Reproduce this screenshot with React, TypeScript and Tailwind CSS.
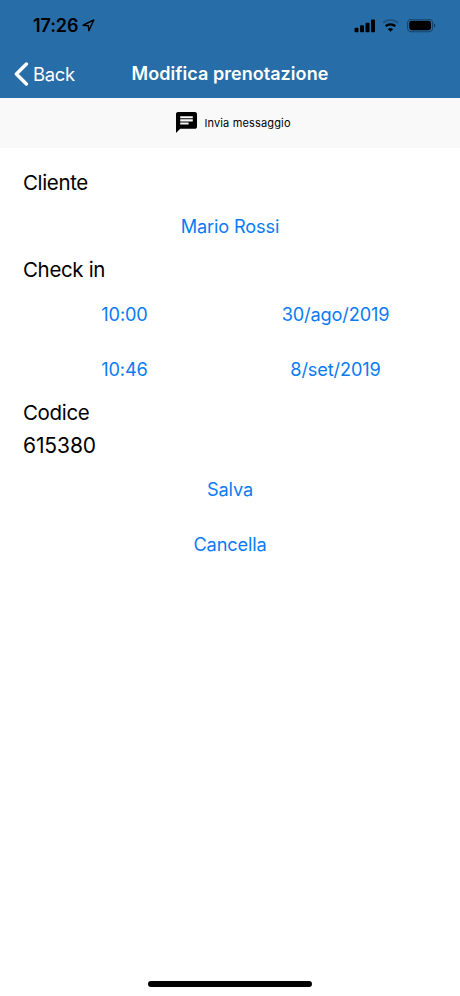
import type { ReactNode } from "react";

function StatusBar() {
  return (
    <div className="flex h-[50px] items-center justify-between pt-px pl-[33px] pr-[24px] text-black">
      <div className="flex items-center gap-[4px]">
        <span className="text-[18px] leading-6 font-semibold tracking-[-0.1px]">17:26</span>
        <svg width="14" height="14" viewBox="0 0 14 14" fill="none">
          <path d="M11.8 1 1 6.2l5.4.5.4 5z" stroke="currentColor" strokeWidth="1.4" strokeLinejoin="round" />
        </svg>
      </div>
      <div className="flex items-center">
        <svg width="22" height="14" viewBox="0 0 22 14" fill="currentColor">
          <rect x="0.5" y="8.7" width="4" height="4.5" rx="1" />
          <rect x="6" y="6.2" width="4" height="7" rx="1" />
          <rect x="11.5" y="3.7" width="4" height="9.5" rx="1" />
          <rect x="17" y="0.4" width="4" height="12.8" rx="1" />
        </svg>
        <svg className="ml-[6px]" width="17" height="14" viewBox="0 0 17 14" fill="none" stroke="currentColor">
          <path d="M1 4a11 11 0 0 1 15 0" strokeWidth="2" opacity="0.22" />
          <path d="M3.7 7.2a7 7 0 0 1 9.6 0" strokeWidth="2.3" />
          <path d="M8.5 12.8 5.9 10.3a3.8 3.8 0 0 1 5.2 0z" fill="currentColor" stroke="none" />
        </svg>
        <svg className="ml-[8px]" width="29" height="14" viewBox="0 0.4 29 14" fill="none">
          <rect x="0.6" y="0.6" width="25" height="12.6" rx="3.8" stroke="currentColor" strokeOpacity="0.4" strokeWidth="1.1" />
          <rect x="2.2" y="2.2" width="21.8" height="9.4" rx="2.4" fill="currentColor" />
          <path d="M27 4.8c1.8.6 1.8 3.6 0 4.2z" fill="currentColor" fillOpacity="0.45" />
        </svg>
      </div>
    </div>
  );
}

function NavBar() {
  return (
    <div className="grid h-12 grid-cols-[1fr_auto_1fr] items-center text-white">
      <button className="flex items-center gap-[4px] pl-[14px]">
        <svg width="15" height="24" viewBox="0 0 15 24" fill="none">
          <path d="M12.4 2 2.4 12l10 10" stroke="currentColor" strokeWidth="3.4" strokeLinecap="round" strokeLinejoin="round" />
        </svg>
        <span className="text-[18.4px] leading-6 tracking-[-0.25px]">Back</span>
      </button>
      <h1 className="text-[18px] leading-6 font-semibold tracking-[0.05px]">Modifica prenotazione</h1>
    </div>
  );
}

function Label({ children }: { children: ReactNode }) {
  return <p className="h-8 text-[20.5px] leading-8 tracking-[-0.35px] text-black">{children}</p>;
}

function LinkButton({ children }: { children: ReactNode }) {
  return (
    <button className="h-[55.5px] w-full text-[18.2px] leading-6 tracking-[-0.15px] text-[#0a7bf5]">{children}</button>
  );
}

export default function App() {
  return (
    <div className="flex h-[996px] w-[460px] flex-col bg-white font-['Inter',sans-serif]">
      <header className="h-[98px] bg-[#276da8]">
        <StatusBar />
        <NavBar />
      </header>

      <button className="flex h-[50px] items-center justify-center gap-[7px] bg-[#f9f9f9] pl-[7px] text-black">
        <svg className="mb-[2px]" width="21" height="21" viewBox="2 2 20 20" fill="currentColor">
          <path d="M20 2H4c-1.1 0-1.99.9-1.99 2L2 22l4-4h14c1.1 0 2-.9 2-2V4c0-1.1-.9-2-2-2zM6 9h12v2H6V9zm8 5H6v-2h8v2zm4-6H6V6h12v2z" />
        </svg>
        <span className="text-[11px] leading-4 tracking-[0.15px]">Invia messaggio</span>
      </button>

      <main className="flex-1 px-[23px] pt-[18.5px]">
        <Label>Cliente</Label>
        <LinkButton>Mario Rossi</LinkButton>
        <Label>Check in</Label>
        <div className="grid grid-cols-2 gap-x-2">
          <LinkButton>10:00</LinkButton>
          <LinkButton>30/ago/2019</LinkButton>
          <LinkButton>10:46</LinkButton>
          <LinkButton>8/set/2019</LinkButton>
        </div>
        <Label>Codice</Label>
        <p className="h-8 text-[21px] leading-[34px] tracking-[-0.1px] text-black">615380</p>
        <LinkButton>Salva</LinkButton>
        <LinkButton>Cancella</LinkButton>
      </main>

      <div className="mx-auto mb-[9px] h-[6px] w-[164px] rounded-full bg-black" />
    </div>
  );
}
